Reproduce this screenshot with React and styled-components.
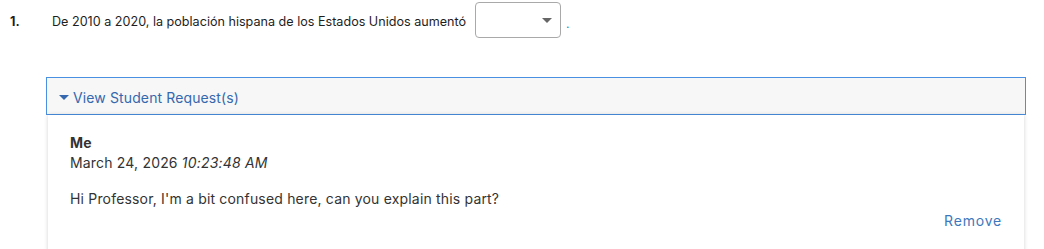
import React from "react";
import styled, { createGlobalStyle } from "styled-components";

const Global = createGlobalStyle`
  body {
    margin: 0;
    background: #fff;
    font-family: Inter, "Noto Sans", Arial, sans-serif;
    color: #333;
  }
`;

const Page = styled.div`
  width: 1044px;
  height: 249px;
  overflow: hidden;
`;

const Question = styled.div`
  display: flex;
  align-items: center;
  height: 36px;
  margin-top: 2px;
  font-size: 12.6px;
  color: #1e1e1e;
`;

const Number = styled.span`
  font-weight: 700;
  width: 42px;
  padding-left: 10px;
  margin-top: 3px;
`;

const Prompt = styled.span`
  margin-right: 9px;
  margin-top: 3px;
`;

const Select = styled.div`
  height: 34px;
  width: 76px;
  border: 1px solid #a9a9a9;
  border-radius: 4px;
  display: flex;
  align-items: center;
  justify-content: flex-end;
  padding-right: 8px;
`;

const Caret = styled.span`
  width: 0;
  height: 0;
  border-left: 5px solid transparent;
  border-right: 5px solid transparent;
  border-top: 5px solid #666;
`;

const Dot = styled.span`
  margin-left: 5px;
  margin-top: 6px;
  color: #1f8ac0;
  font-size: 12px;
`;

const Panel = styled.div`
  margin: 39px 0 0 46px;
  width: 980px;
`;

const Header = styled.div`
  border: 1px solid #4a90e2;
  background: #f7f7f7;
  display: flex;
  align-items: center;
  padding-left: 12px;
  padding-top: 2px;
  box-sizing: border-box;
  height: 38px;
  font-size: 14px;
  letter-spacing: 0.12px;
  color: #3568ae;
`;

const Triangle = styled.span`
  width: 0;
  height: 0;
  border-left: 5px solid transparent;
  border-right: 5px solid transparent;
  border-top: 5px solid #3568ae;
  margin-right: 4px;
`;

const Body = styled.div`
  margin: 0 2px;
  background: #fff;
  box-shadow: 0 0 4px rgba(0, 0, 0, 0.18);
  padding: 18px 22px 40px;
  font-size: 14px;
  letter-spacing: 0.18px;
  color: #333;
`;

const Author = styled.div`
  font-weight: 700;
  line-height: 20px;
`;

const Stamp = styled.div`
  line-height: 20px;
  em {
    font-style: italic;
  }
`;

const Message = styled.div`
  margin-top: 16px;
  line-height: 20px;
`;

const Actions = styled.div`
  display: flex;
  justify-content: flex-end;
  margin-top: 2px;
`;

const Link = styled.span`
  color: #3d78bd;
  letter-spacing: 0.8px;
  line-height: 20px;
`;

export default function App() {
  return (
    <Page>
      <Global />
      <Question>
        <Number>1.</Number>
        <Prompt>De 2010 a 2020, la población hispana de los Estados Unidos aumentó</Prompt>
        <Select>
          <Caret />
        </Select>
        <Dot>.</Dot>
      </Question>
      <Panel>
        <Header>
          <Triangle />
          View Student Request(s)
        </Header>
        <Body>
          <Author>Me</Author>
          <Stamp>
            March 24, 2026 <em>10:23:48 AM</em>
          </Stamp>
          <Message>Hi Professor, I'm a bit confused here, can you explain this part?</Message>
          <Actions>
            <Link>Remove</Link>
          </Actions>
        </Body>
      </Panel>
    </Page>
  );
}
